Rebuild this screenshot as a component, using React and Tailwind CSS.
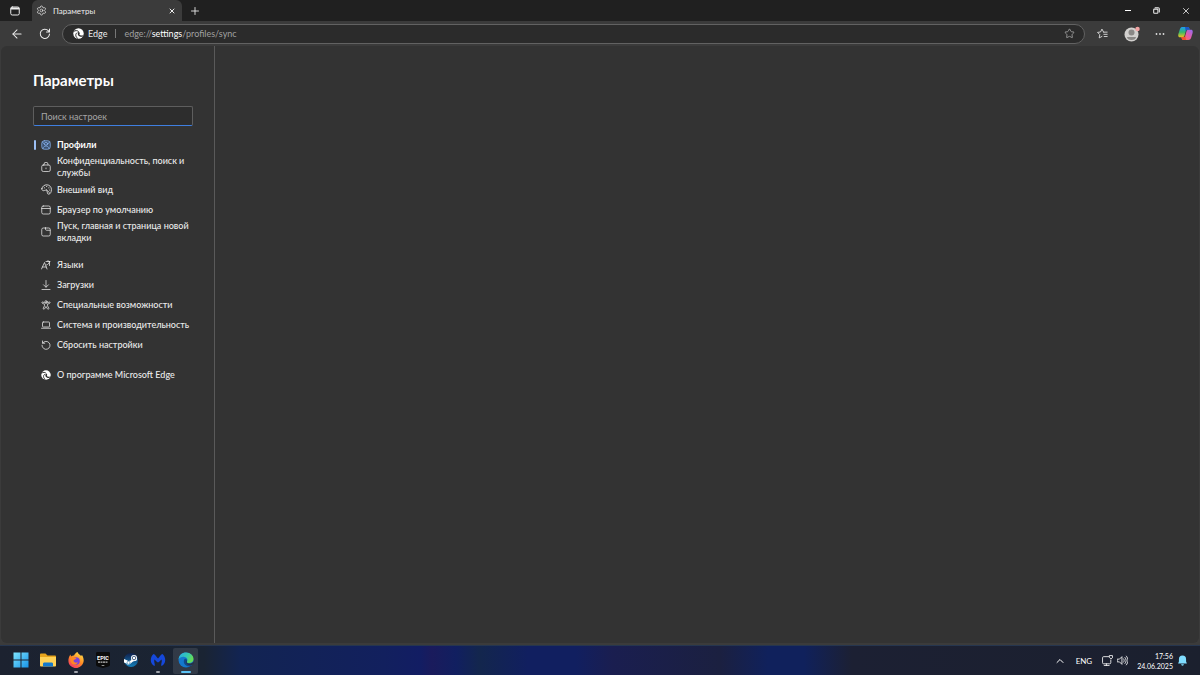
import { useState } from 'react';
import { ArrowLeft, ChevronUp, Plus, Settings, Star, X } from 'lucide-react';

const Glyph = ({ children, className = 'w-[10px] h-[10px]' }) => (
  <svg viewBox="0 0 20 20" fill="none" stroke="currentColor" strokeWidth="1.5" strokeLinecap="round" strokeLinejoin="round" className={`shrink-0 ${className}`} aria-hidden="true">
    {children}
  </svg>
);

const EdgeMark = ({ className }) => (
  <svg viewBox="0 0 20 20" className={`shrink-0 ${className}`} aria-hidden="true">
    <circle cx="10" cy="10" r="9.5" fill="#ffffff" />
    <path d="M1 6.5C4 4 8.5 4.2 10.5 7M8.5 19C4 15.500 4 10 8 8.500" fill="none" stroke="#2b2b2b" strokeWidth="1.8" />
    <path d="M10 7c2.500 1 3 3 1.500 5 1.500 2 5 2 8 .5-1 3-4 4-7 3-4-1.200-5-5-2.500-8.500Z" fill="#2b2b2b" />
  </svg>
);

const icons = {
  profiles: (
    <Glyph className="w-[10px] h-[10px] text-[#8ab4f0]">
      <rect x="1.5" y="1.5" width="17" height="17" rx="5" fill="#3c5270" />
      <circle cx="10" cy="7.5" r="3" />
      <path d="M4 17c1-4 3-5 6-5s5 1 6 5M3 4l4 5M17 4l-4 5" />
    </Glyph>
  ),
  privacy: (
    <Glyph>
      <rect x="1.5" y="6" width="17" height="13" rx="3" />
      <path d="M6 6V4.5a4 4 0 0 1 8 0V6M10 12v1.5" />
    </Glyph>
  ),
  appearance: (
    <Glyph className="w-[11px] h-[11px]">
      <path d="M1.5 8.5C2.5 4 6 1.5 10.5 1.5c5 0 8.5 4 8.5 8.5 0 4.500-2 8.500-5 8.500-3.500 0-1.500-4.500-4-6.500-2.500-2-4.500 1-6.500 0-1.500-.7-2.400-2-2-3.500Z" />
      <path d="M6 7h.5M10 4.5h.5M14 7h.5M9.5 10l6 6M15.5 11h.5" />
    </Glyph>
  ),
  browser: (
    <Glyph>
      <rect x="1.5" y="2" width="17" height="16" rx="3" />
      <path d="M1.5 7h17" />
    </Glyph>
  ),
  start: (
    <Glyph>
      <path d="M9 2H4.5a3 3 0 0 0-3 3v10a3 3 0 0 0 3 3h11a3 3 0 0 0 3-3V6.500H11a2 2 0 0 1-2-2V2Zm0 0h6.500a3 3 0 0 1 3 3v1.500" />
    </Glyph>
  ),
  languages: (
    <Glyph>
      <path d="M1 18 7 5l5 13M3 14h7.5M10 3h8M14 1v2M17 3c-.5 4-3 6-6 7M17 3v8" />
    </Glyph>
  ),
  downloads: (
    <Glyph>
      <path d="M10 1v13M5 9.5l5 5 5-5M2 19h16" />
    </Glyph>
  ),
  access: (
    <Glyph>
      <circle cx="10" cy="3.5" r="2.2" />
      <path d="M8 6 3.5 4C1.5 3.500 1 6 2.500 6.500L7 8.500v3l-2.500 5c-.5 2 1.800 2.800 2.500 1.200L10 13l3 4.700c.8 1.600 3 .8 2.500-1.200l-2.500-5v-3l4.500-2C19 6 18.500 3.500 16.500 4L12 6Z" />
    </Glyph>
  ),
  system: (
    <Glyph>
      <rect x="3" y="4" width="14" height="10" rx="1.5" />
      <path d="M1 16.5h18" />
    </Glyph>
  ),
  reset: (
    <Glyph>
      <path d="M3 2v4.5h4.5M3.500 6A8 8 0 1 1 2 10.500" />
    </Glyph>
  ),
  about: <EdgeMark className="w-[10px] h-[10px]" />,
};

const navGroups = [
  [
    { id: 'profiles', label: 'Профили' },
    { id: 'privacy', label: 'Конфиденциальность, поиск и службы' },
    { id: 'appearance', label: 'Внешний вид' },
    { id: 'browser', label: 'Браузер по умолчанию' },
    { id: 'start', label: 'Пуск, главная и страница новой вкладки' },
  ],
  [
    { id: 'languages', label: 'Языки' },
    { id: 'downloads', label: 'Загрузки' },
    { id: 'access', label: 'Специальные возможности' },
    { id: 'system', label: 'Система и производительность' },
    { id: 'reset', label: 'Сбросить настройки' },
  ],
  [{ id: 'about', label: 'О программе Microsoft Edge' }],
];

const TabStrip = () => (
  <header className="flex h-[21px] shrink-0 bg-[#202020]">
    <button type="button" aria-label="Меню вкладок" className="w-8 pr-[2px] flex items-center justify-center">
      <Glyph className="w-[10px] h-[10px]">
        <rect x="1.5" y="2" width="17" height="16" rx="3" strokeWidth="2" />
        <path d="M3 5h14" strokeWidth="4" />
      </Glyph>
    </button>
    <div className="w-[150px] flex items-center bg-[#3b3b3b] rounded-t-md pl-1 pr-[2px]">
      <Settings className="w-[11px] h-[11px] shrink-0" strokeWidth={1.5} />
      <span className="flex-1 pl-[6px] text-[8px]">Параметры</span>
      <button type="button" aria-label="Закрыть вкладку" className="p-1">
        <X className="w-2 h-2" strokeWidth={3} />
      </button>
    </div>
    <button type="button" aria-label="Новая вкладка" className="w-[26px] flex items-center justify-center">
      <Plus className="w-3 h-3" strokeWidth={1.75} />
    </button>
    <div className="ml-auto flex">
      <button type="button" aria-label="Свернуть" className="w-[29px] flex items-center justify-center">
        <span className="w-[6px] h-px bg-white" />
      </button>
      <button type="button" aria-label="Восстановить" className="w-[29px] flex items-center justify-center">
        <Glyph className="w-[7px] h-[7px]">
          <rect x="2" y="6" width="12" height="12" rx="2" strokeWidth="3" />
          <path d="M6 2h9a3 3 0 0 1 3 3v9" strokeWidth="3" />
        </Glyph>
      </button>
      <button type="button" aria-label="Закрыть" className="w-[29px] flex items-center justify-center">
        <X className="w-[10px] h-[10px]" />
      </button>
    </div>
  </header>
);

const Toolbar = () => (
  <div className="flex items-center h-[25px] shrink-0 bg-[#3b3b3b]">
    <button type="button" aria-label="Назад" className="w-[34px] flex items-center justify-center">
      <ArrowLeft className="w-[14px] h-[14px]" strokeWidth={1.75} />
    </button>
    <button type="button" aria-label="Обновить" className="w-[22px] flex items-center justify-center">
      <Glyph className="w-3 h-3">
        <path d="M17.5 10A7.7 7.7 0 1 1 15.5 4.5L17.5 6.5M17.5 1.5v5h-5" strokeWidth="1.7" />
      </Glyph>
    </button>
    <div className="flex-1 flex items-center h-5 ml-[6px] pl-[10px] pr-[9px] rounded-full bg-[#2b2b2b] border border-[#626262]">
      <EdgeMark className="w-[11px] h-[11px]" />
      <span className="pl-1 text-[9px]">Edge</span>
      <span className="w-px h-[9px] mx-2 bg-[#777777]" />
      <span className="flex-1 text-[9px] text-[#a0a0a0]">
        edge://<span className="text-white">settings</span>/profiles/sync
      </span>
      <button type="button" aria-label="Добавить в избранное" className="text-[#a8a8a8]">
        <Star className="w-[11px] h-[11px]" strokeWidth={1.75} />
      </button>
    </div>
    <button type="button" aria-label="Избранное" className="w-[35px] flex items-center justify-center">
      <Glyph className="w-[11px] h-[11px]">
        <path d="M12 7.5 9 2 6.5 7.2 1 8l4 4-1 6 5-2.7M12 7.5h6.5M12.5 11.5h6M13 15.5h5.5" />
      </Glyph>
    </button>
    <button type="button" aria-label="Профиль" className="w-[23px] flex items-center justify-center">
      <svg viewBox="0 0 32 32" className="w-4 h-4" aria-hidden="true">
        <circle cx="15" cy="17" r="14" fill="#d2d0ce" />
        <circle cx="15" cy="13" r="6" fill="#8a8886" />
        <path d="M6 22h18c0 4-4 6-9 6s-9-2-9-6Z" fill="#8a8886" />
        <circle cx="27" cy="6" r="4.5" fill="#f1a3a3" />
      </svg>
    </button>
    <button type="button" aria-label="Настройки и другое" className="w-[33px] flex items-center justify-center">
      <svg viewBox="0 0 20 20" className="w-[10px] h-[10px]" fill="#dddddd" aria-hidden="true">
        <circle cx="3" cy="10" r="1.8" />
        <circle cx="10" cy="10" r="1.8" />
        <circle cx="17" cy="10" r="1.8" />
      </svg>
    </button>
    <button type="button" aria-label="Copilot" className="w-6 flex items-center">
      <svg viewBox="0 0 28 28" className="w-[15px] h-[15px] ml-[2px]" aria-hidden="true">
        <defs>
          <linearGradient id="copilotLeft" x1="0" y1="0" x2="0" y2="1">
            <stop offset="0" stopColor="#1d9bf0" />
            <stop offset=".5" stopColor="#35b86b" />
            <stop offset="1" stopColor="#f3c51d" />
          </linearGradient>
          <linearGradient id="copilotRight" x1="1" y1="0" x2="0" y2="1">
            <stop offset="0" stopColor="#8f6cf5" />
            <stop offset=".5" stopColor="#e85ca8" />
            <stop offset="1" stopColor="#fb7a35" />
          </linearGradient>
        </defs>
        <path d="M9 2h9c2 0 3 2 4 5h-4c-2 0-3 1-3.5 3l-2 7c-.7 3-2 4-4.5 4H4c-4 0-4-4-3-7l2.5-8C4.5 3 6 2 9 2Z" fill="url(#copilotLeft)" />
        <path d="M19 26h-9c-2 0-3-2-4-5h4c2 0 3-1 3.5-3l2-7c.7-3 2-4 4.5-4h4c4 0 4 4 3 7l-2.5 8c-1 3-2.5 4-5.5 4Z" fill="url(#copilotRight)" />
        <path d="M13 2h5c2 0 3 2 4 5h-4c-2 0-3 1-3.5 3-1-2-.5-6-1.5-8Z" fill="#1c56c9" />
        <path d="M15 26h-5c-2 0-3-2-4-5h4c2 0 3-1 3.5-3 1 2 .5 6 1.5 8Z" fill="#f4512c" />
      </svg>
    </button>
  </div>
);

const Sidebar = ({ active, onSelect }) => {
  const [query, setQuery] = useState('');

  return (
    <aside className="w-[214px] shrink-0 border-r border-[#5a5a5a] pl-8 pr-[21px] pt-6">
      <h1 className="text-[15px] leading-5 font-bold text-white">Параметры</h1>
      <input
        type="text"
        aria-label="Поиск настроек"
        placeholder="Поиск настроек"
        value={query}
        onChange={(e) => setQuery(e.target.value)}
        className="block w-full h-5 mt-4 px-[7px] text-[9px] bg-[#2d2d2d] border border-[#5e5e5e] border-b-[#3f7fe0] rounded-xs placeholder:text-[#a6a6a6] outline-none"
      />
      <nav className="mt-2 -mr-2 flex flex-col gap-[10px] text-[9px] leading-3">
        {navGroups.map((group) => (
          <ul key={group[0].id}>
            {group.map((item) => (
              <li key={item.id}>
                <a
                  href={`#${item.id}`}
                  onClick={() => onSelect(item.id)}
                  aria-current={active === item.id ? 'page' : undefined}
                  className="flex items-center min-h-5 pt-px"
                >
                  <span className={`w-[2px] h-[10px] ml-px mr-[5px] shrink-0 rounded-full ${active === item.id ? 'bg-[#9dc0f5]' : ''}`} />
                  <span className="w-[10px] flex justify-center shrink-0">{icons[item.id]}</span>
                  <span className={`pl-[6px] ${active === item.id ? 'font-bold text-white' : 'font-medium'}`}>{item.label}</span>
                </a>
              </li>
            ))}
          </ul>
        ))}
      </nav>
    </aside>
  );
};

const taskbarApps = [
  {
    name: 'Пуск',
    art: (
      <>
        <defs>
          <linearGradient id="winTile" x1="0" y1="0" x2="1" y2="1">
            <stop offset="0" stopColor="#7ee4ff" />
            <stop offset="1" stopColor="#1793e6" />
          </linearGradient>
        </defs>
        <path d="M1 1h14v14H1ZM17 1h14v14H17ZM1 17h14v14H1ZM17 17h14v14H17Z" fill="url(#winTile)" />
      </>
    ),
  },
  {
    name: 'Проводник',
    art: (
      <>
        <path d="M0 5c0-1 1-2 2-2h9l4 4h15c1 0 2 1 2 2v18H0Z" fill="#e8a51d" />
        <path d="M0 10h32v17c0 1-1 2-2 2H2c-1 0-2-1-2-2Z" fill="#ffd257" />
        <path d="M6 29v-5c0-2 1-3 3-3h14c2 0 3 1 3 3v5Z" fill="#1479cc" />
      </>
    ),
  },
  {
    name: 'Firefox',
    running: true,
    art: (
      <>
        <defs>
          <linearGradient id="fox" x1=".8" y1="0" x2=".2" y2="1">
            <stop offset="0" stopColor="#ffe14a" />
            <stop offset=".5" stopColor="#ff8a24" />
            <stop offset="1" stopColor="#f5306b" />
          </linearGradient>
        </defs>
        <path d="M19 0c1 4 5 5 7 8l2-2c3 5 4 10 3 14-2 7-8 12-15 12S2 27 1 20C0 14 2 9 5 5l1 4c2-2 4-2 6-2 1-3 4-6 7-7Z" fill="url(#fox)" />
        <circle cx="16" cy="18" r="7.5" fill="#7b42dc" />
        <path d="M5 12c5-3 8 0 12 0-1 3-6 3-6 6 2 4 6 4 9 2-2 6-9 7-13 2-2-3-3-7-2-10Z" fill="#ff8724" />
      </>
    ),
  },
  {
    name: 'Epic Games',
    art: (
      <>
        <path d="M5 0h22c2 0 3 1 3 3v22c0 2-1 3-3 4l-11 3-11-3c-2-1-3-2-3-4V3c0-2 1-3 3-3Z" fill="#0b0b0b" />
        <text x="16" y="15" textAnchor="middle" fontSize="11" fontWeight="bold" fontFamily="Liberation Sans Narrow, Roboto, sans-serif" fill="#ffffff">EPIC</text>
        <path d="M6 20h20" stroke="#bdbdbd" strokeWidth="2.5" strokeDasharray="4 1" />
        <path d="M12 26h8l-4 2Z" fill="#bdbdbd" />
      </>
    ),
  },
  {
    name: 'Steam',
    art: (
      <>
        <defs>
          <linearGradient id="steam" x1="0" y1="0" x2="0" y2="1">
            <stop offset="0" stopColor="#10204d" />
            <stop offset="1" stopColor="#147fb9" />
          </linearGradient>
        </defs>
        <circle cx="16" cy="16" r="14" fill="url(#steam)" />
        <path d="M2 14 11 18 16 17l4-7 8 3-1 4-7 2-6 5c-3 3-6 1-7-1l-5-2Z" fill="#ffffff" />
        <circle cx="22" cy="12" r="6" fill="#ffffff" />
        <circle cx="22" cy="12" r="3.5" fill="none" stroke="#17345e" strokeWidth="1.5" />
        <circle cx="11" cy="21.5" r="3" fill="none" stroke="#176ba0" strokeWidth="1.2" />
      </>
    ),
  },
  {
    name: 'Malwarebytes',
    running: true,
    art: (
      <path d="M9 28C0 25-1 11 7 4c3 0 6 6 9 9 3-3 6-9 9-9 8 7 7 21-2 24-2-3 2-8 0-13-2 1-5 6-7 6s-5-5-7-6c-2 5 2 10 0 13Z" fill="#1548db" />
    ),
  },
  {
    name: 'Microsoft Edge',
    active: true,
    art: (
      <>
        <defs>
          <linearGradient id="edgeTop" x1="0" y1="0" x2="1" y2=".4">
            <stop offset="0" stopColor="#2aa8e8" />
            <stop offset=".6" stopColor="#35c9b0" />
            <stop offset="1" stopColor="#65dc55" />
          </linearGradient>
        </defs>
        <circle cx="16" cy="16" r="15" fill="#1479ce" />
        <path d="M1 15C2 6 8 1 16 1c9 0 15 6 15 13 0 5-4 8-9 8-3 0-5-1-4-3 2-3 1-8-5-9-5-1-10 1-12 5Z" fill="url(#edgeTop)" />
        <path d="M13 14c-4 7 1 15 10 15 3-1 6-3 7-6-4 2-9 1-11-1-2-1-2-3-1-5 0-3-3-4-5-3Z" fill="#114a8b" />
        <path d="M18 17c-2 3-1 6 4 6 3 0 6-1 8-3l3 2-3 3c-4 2-10 2-13-2-2-3-1-6 1-6Z" fill="#263247" />
      </>
    ),
  },
];

const Taskbar = () => (
  <footer className="flex items-center h-[30px] shrink-0 border-t border-[#26364f] bg-[linear-gradient(90deg,#1c2230_0%,#1a2433_17%,#122452_20%,#12205e_32%,#121d63_35%,#1a1b5c_36%,#111f60_38%,#13264d_40%,#111f60_44%,#111f60_48%,#1a1e50_51%,#1b2040_60%,#10215c_64%,#10215c_67%,#1c2033_71%,#1b202e_100%)]">
    <div className="flex justify-between w-[198px] pl-2">
      {taskbarApps.map((app) => (
        <button
          key={app.name}
          type="button"
          aria-label={app.name}
          className={`flex flex-col items-center justify-between w-[25px] h-[26px] pt-1 pb-px rounded-xs ${app.active ? 'bg-white/10' : ''}`}
        >
          <svg viewBox="0 0 32 32" className="w-4 h-4" aria-hidden="true">{app.art}</svg>
          <span className={`h-[2px] rounded-full ${app.active ? 'w-[10px] bg-[#5cc3f5]' : app.running ? 'w-1 bg-[#a0a4ac]' : ''}`} />
        </button>
      ))}
    </div>
    <div className="ml-auto flex items-center pr-3 text-white">
      <button type="button" aria-label="Скрытые значки">
        <ChevronUp className="w-3 h-3" />
      </button>
      <button type="button" className="ml-[10px] text-[8px]">ENG</button>
      <button type="button" aria-label="Сеть и звук" className="ml-[10px] flex items-center gap-1">
        <Glyph className="w-[11px] h-[11px]">
          <path d="M12 3H3a2 2 0 0 0-2 2v9a2 2 0 0 0 2 2h11a2 2 0 0 0 2-2V9M8 16v3M4 19h9M14 1h5v4l-2.5 2L14 5Z" />
        </Glyph>
        <Glyph className="w-[11px] h-[11px]">
          <path d="M1 7.5h3.5L9 3v14l-4.5-4.5H1ZM12 7c1.5 2 1.5 4 0 6M14.5 4.5c3 3.5 3 7.5 0 11M17 2c4 5 4 11 0 16" />
        </Glyph>
      </button>
      <time dateTime="2025-06-24T17:56" className="ml-[9px] text-right text-[7px] leading-[10px]">
        17:56
        <br />
        24.06.2025
      </time>
      <button type="button" aria-label="Уведомления" className="ml-1">
        <svg viewBox="0 0 20 20" className="w-[11px] h-[11px]" fill="#7fdcff" aria-hidden="true">
          <path d="M10 1a6.5 6.5 0 0 0-6.5 6.5V12L2 15.5h16L16.5 12V7.5A6.5 6.5 0 0 0 10 1ZM7.5 17h5a2.5 2.5 0 0 1-5 0Z" />
        </svg>
      </button>
    </div>
  </footer>
);

export default function App() {
  const [active, setActive] = useState('profiles');

  return (
    <div className="flex flex-col h-screen bg-[#3b3b3b] text-[#ececec] font-[Lato,Roboto,sans-serif]">
      <TabStrip />
      <Toolbar />
      <div className="flex flex-1 min-h-0 mx-px mb-[2px] rounded-md overflow-hidden bg-[#333333]">
        <Sidebar active={active} onSelect={setActive} />
        <main className="flex-1" />
      </div>
      <Taskbar />
    </div>
  );
}
